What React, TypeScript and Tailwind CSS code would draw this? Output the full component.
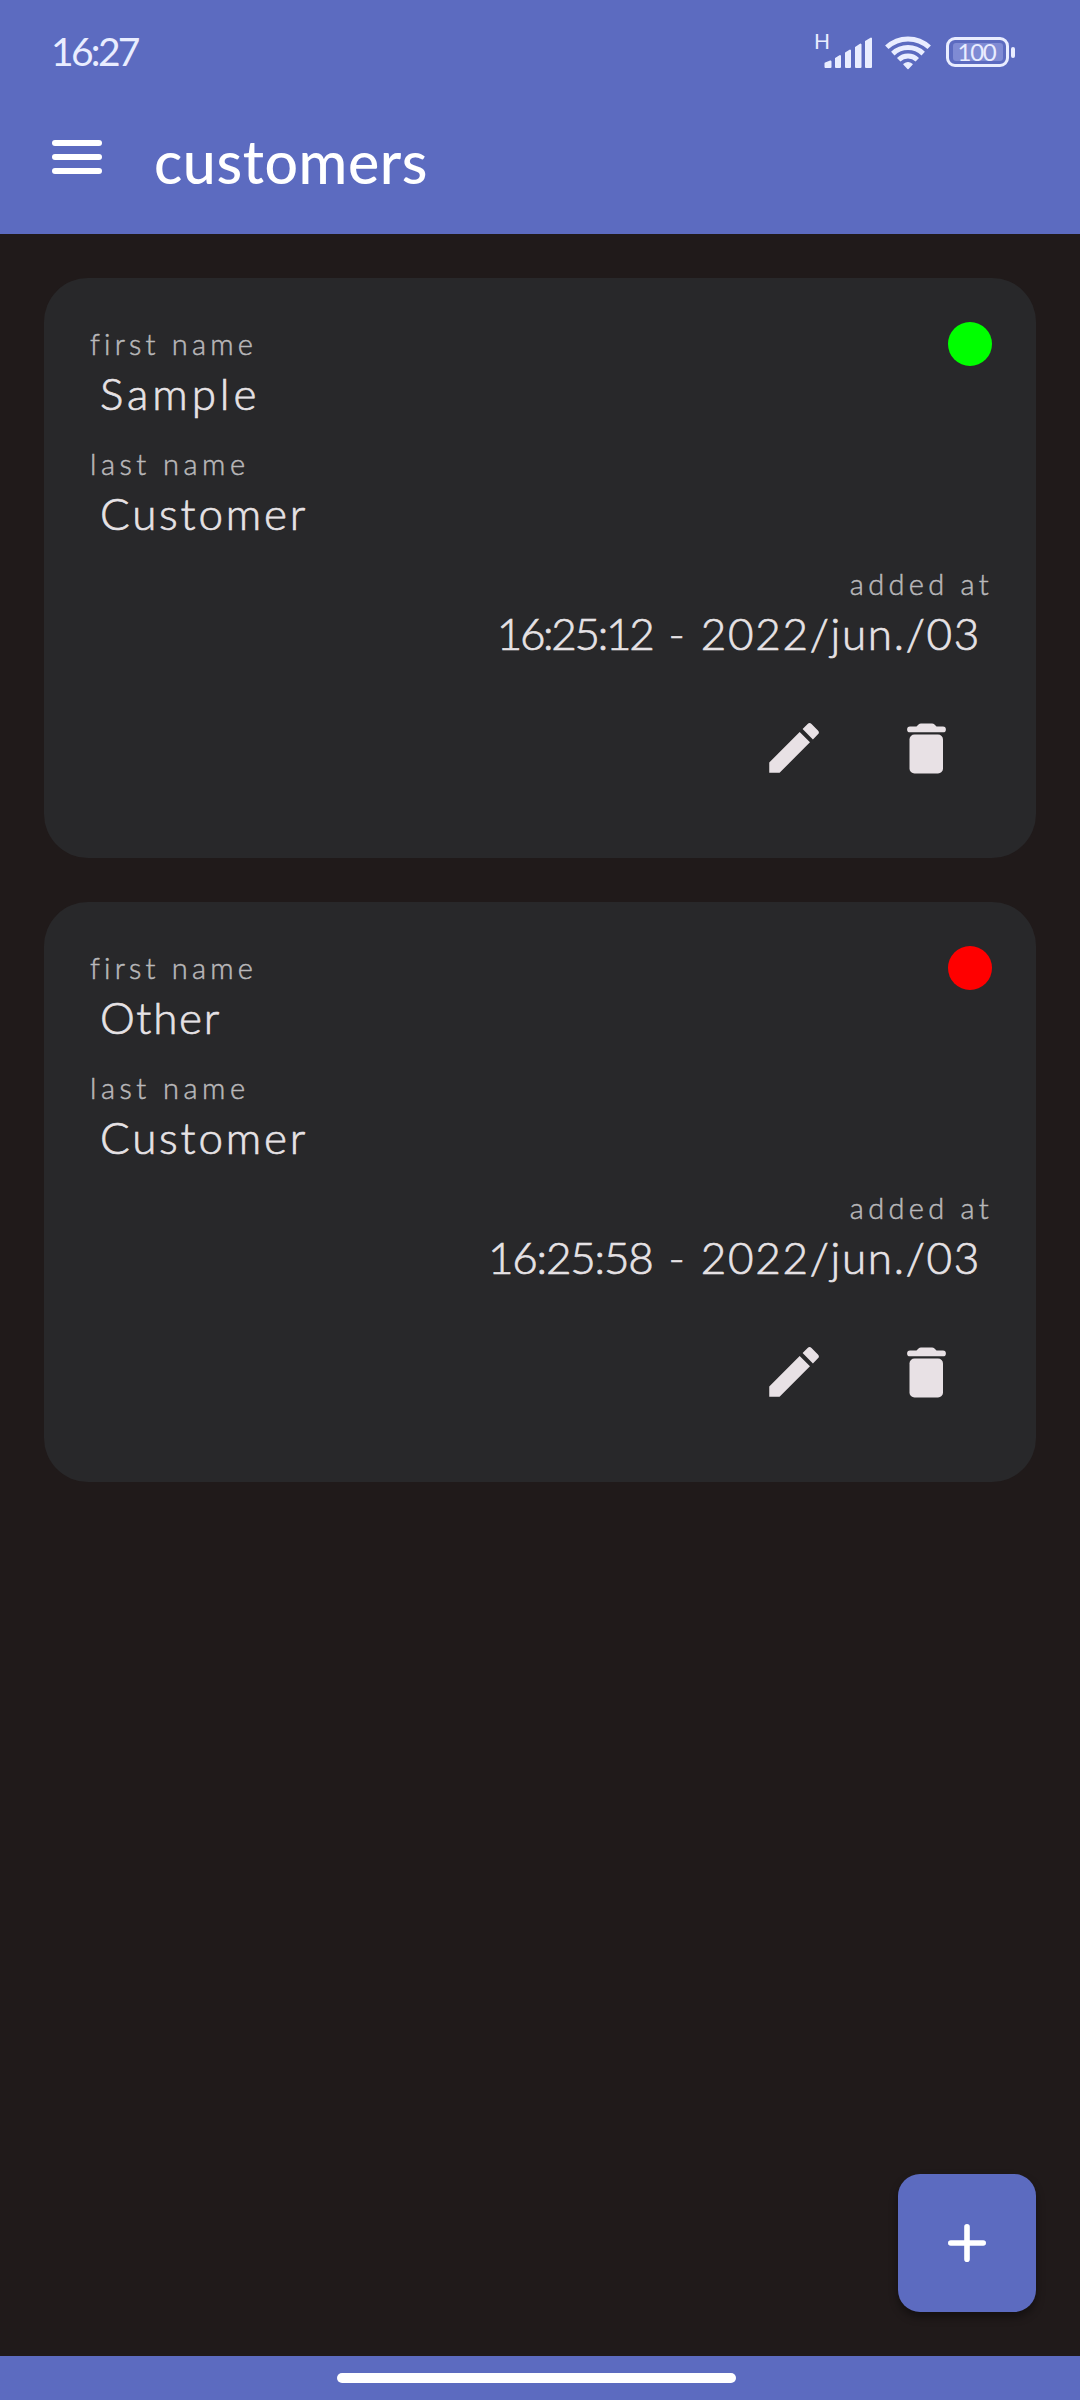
import { MdEdit } from "react-icons/md";
import { clsx } from "clsx";

type Customer = {
  id: number;
  firstName: string;
  lastName: string;
  time: string;
  date: string;
  active: boolean;
  firstNameTracking: string;
  timeTracking: string;
};

const customers: Customer[] = [
  {
    id: 1,
    firstName: "Sample",
    lastName: "Customer",
    time: "16:25:12",
    date: "2022/jun./03",
    active: true,
    firstNameTracking: "tracking-[3.9px]",
    timeTracking: "tracking-[-2.3px]",
  },
  {
    id: 2,
    firstName: "Other",
    lastName: "Customer",
    time: "16:25:58",
    date: "2022/jun./03",
    active: false,
    firstNameTracking: "tracking-[1.7px]",
    timeTracking: "tracking-[-1.2px]",
  },
];

export default function App() {
  return (
    <div className="flex h-[2400px] w-[1080px] flex-col bg-[#201a1a] font-['Lato',sans-serif]">
      <header className="h-[234px] bg-[#5c6bc0] text-white">
        <StatusBar />
        <div className="flex items-start pl-[52px]">
          <button className="mt-[36px] flex w-[50px] flex-col gap-2" aria-label="Menu">
            <span className="h-1.5 rounded-full bg-white" />
            <span className="h-1.5 rounded-full bg-white" />
            <span className="h-1.5 rounded-full bg-white" />
          </button>
          <h1 className="mt-[18px] ml-[52px] text-[59px] leading-[80px] font-medium tracking-[0.6px]">
            customers
          </h1>
        </div>
      </header>

      <main className="flex flex-1 flex-col gap-11 p-11">
        {customers.map((customer) => (
          <CustomerCard key={customer.id} customer={customer} />
        ))}

        <button
          className="mt-auto flex size-[138px] items-center justify-center self-end rounded-[22px] bg-[#5c6bc0] shadow-[0_5px_8px_rgba(0,0,0,0.4)]"
          aria-label="Add"
        >
          <svg className="size-[38px]" viewBox="0 0 38 38" stroke="#fff" strokeWidth="5.6" strokeLinecap="round">
            <path d="M19 2.8v32.4M2.8 19h32.4" />
          </svg>
        </button>
      </main>

      <footer className="flex h-11 justify-center bg-[#5c6bc0] pt-[17px]">
        <div className="mr-[7px] h-2.5 w-[399px] rounded-full bg-white" />
      </footer>
    </div>
  );
}

function StatusBar() {
  return (
    <div className="flex h-[104px] items-start justify-between pr-[65px] pl-[51px] text-[#e9edff]">
      <span className="mt-[28px] text-[39px] leading-[47px] tracking-[-2.7px]">16:27</span>
      <div className="flex items-start pt-[34px]">
        <span className="-mt-[5px] mr-[-6px] text-[21px] leading-6">H</span>
        <svg className="mt-[2px] h-[33px] w-[49px]" viewBox="0 0 49 33" fill="currentColor" stroke="currentColor" strokeWidth="2" strokeLinejoin="round">
          <path d="M1.5 27.5 6.5 25.5V31h-5zM12 22.5l4-2.5v11h-4zM22 17l4-2.5V31h-4zM32 11.5l4.5-3V31H32zM42 5.5l5-3V31h-5z" />
        </svg>
        <svg className="mt-[2px] ml-[12px] h-[34px] w-[46px]" viewBox="0 0 46 34" fill="none" stroke="currentColor" strokeWidth="5">
          <path d="M1.8 11.3a31 31 0 0 1 42.4 0M7.8 17.6a22.3 22.3 0 0 1 30.4 0M13.7 23.8a13.6 13.6 0 0 1 18.6 0" />
          <path d="M23 32.5l-4-4.2q4-3 8 0z" fill="currentColor" strokeWidth="1.5" strokeLinejoin="round" />
        </svg>
        <div className="mt-[3px] ml-[15px] flex items-center">
          <div className="flex h-[30px] w-[63px] items-center justify-center rounded-[9px] border-[3px] border-current">
            <span className="flex h-[18px] w-[50px] items-center justify-center rounded-[3px] bg-[#7f8bd4] pr-[2px] text-[24px] leading-[18px] tracking-[-1.2px]">
              100
            </span>
          </div>
          <span className="ml-[2px] h-[11px] w-1 rounded-[2px] bg-current" />
        </div>
      </div>
    </div>
  );
}

function CustomerCard({ customer }: { customer: Customer }) {
  return (
    <section className="relative flex h-[580px] flex-col gap-[22px] rounded-[44px] bg-[#28282a] pt-[45.5px] pr-[43px] pl-[46px]">
      <span
        className={clsx(
          "absolute top-11 right-11 size-11 rounded-full",
          customer.active ? "bg-[#00ff00]" : "bg-[#ff0000]"
        )}
      />

      <Field label="first name" labelClass="tracking-[4.2px]">
        <span className={customer.firstNameTracking}>{customer.firstName}</span>
      </Field>
      <Field label="last name" labelClass="tracking-[4.5px]">
        <span className="tracking-[2.8px]">{customer.lastName}</span>
      </Field>
      <Field label="added at" labelClass="tracking-[4.3px]" alignEnd>
        <span className={customer.timeTracking}>{customer.time}</span>
        <span className="mx-4">-</span>
        <span className="tracking-[1.7px]">{customer.date}</span>
      </Field>

      <div className="mt-[31px] flex justify-end gap-[66px] pr-[34px] text-[#e8e1e5]">
        <button aria-label="Edit">
          <MdEdit className="size-[66px]" />
        </button>
        <button aria-label="Delete">
          <TrashIcon />
        </button>
      </div>
    </section>
  );
}

function Field({
  label,
  labelClass,
  alignEnd,
  children,
}: {
  label: string;
  labelClass: string;
  alignEnd?: boolean;
  children: React.ReactNode;
}) {
  return (
    <div className={clsx("flex flex-col", alignEnd && "items-end")}>
      <span
        className={clsx(
          "text-[29px] leading-10 font-light text-[#b9b8ba] [-webkit-text-stroke:0.5px]",
          labelClass
        )}
      >
        {label}
      </span>
      <div
        className={clsx(
          "flex text-[44px] leading-[58px] font-light text-[#e6e2e5] [-webkit-text-stroke:0.7px]",
          alignEnd ? "pr-[12px]" : "pl-2.5"
        )}
      >
        {children}
      </div>
    </div>
  );
}

function TrashIcon() {
  return (
    <svg className="size-[66px]" viewBox="0 0 66 66" fill="currentColor">
      <path d="M17 11.5h6.5l2-2q1-1 2.5-1h11q1.5 0 2.5 1l2 2H50a2.9 2.9 0 0 1 0 5.8H17a2.9 2.9 0 0 1 0-5.8z" />
      <rect x="16.5" y="19.5" width="33.5" height="39" rx="5" />
    </svg>
  );
}
